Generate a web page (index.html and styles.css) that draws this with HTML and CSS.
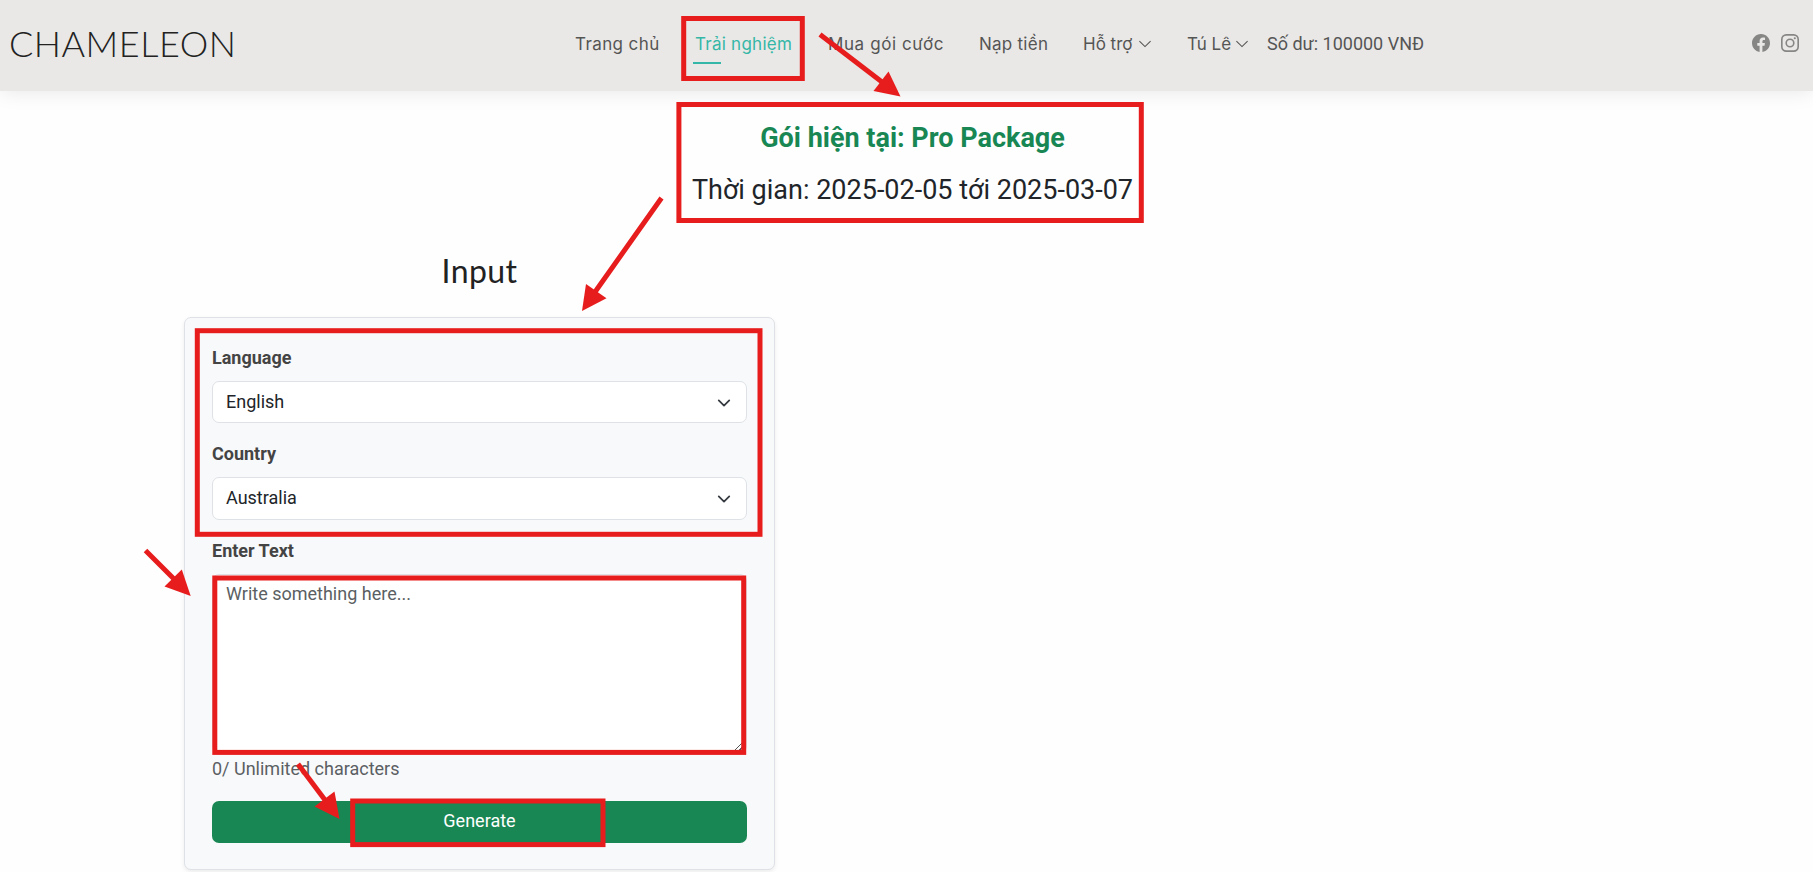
FILE: index.html
```html
<!DOCTYPE html>
<html lang="vi">
<head>
<meta charset="utf-8">
<title>Chameleon</title>
<link rel="stylesheet" href="styles.css">
</head>
<body>
<header class="header">
  <a class="logo">CHAMELEON</a>
  <nav class="nav">
    <a class="n1">Trang chủ</a>
    <a class="n2 active">Trải nghiệm</a>
    <a class="n3">Mua gói cước</a>
    <a class="n4">Nạp tiền</a>
    <a class="n5"><span>Hỗ trợ</span><svg class="chev" viewBox="0 0 16 16"><path d="M1.6 4.6 8 11l6.4-6.4"/></svg></a>
    <a class="n6"><span>Tú Lê</span><svg class="chev" viewBox="0 0 16 16"><path d="M1.6 4.6 8 11l6.4-6.4"/></svg></a>
    <span class="balance">Số dư: 100000 VNĐ</span>
  </nav>
  <div class="social">
    <svg viewBox="0 0 16 16"><path d="M16 8.049c0-4.446-3.582-8.05-8-8.05C3.58 0-.002 3.603-.002 8.05c0 4.017 2.926 7.347 6.75 7.951v-5.625h-2.03V8.05H6.75V6.275c0-2.017 1.195-3.131 3.022-3.131.876 0 1.791.157 1.791.157v1.98h-1.009c-.993 0-1.303.621-1.303 1.258v1.51h2.218l-.354 2.326H9.25V16c3.824-.604 6.75-3.934 6.75-7.951"/></svg>
    <svg viewBox="0 0 16 16"><path fill-rule="evenodd" d="M4.7 0h6.6A4.7 4.7 0 0 1 16 4.7v6.6a4.7 4.7 0 0 1-4.7 4.7H4.7A4.7 4.7 0 0 1 0 11.3V4.7A4.7 4.7 0 0 1 4.7 0m.1 1.45A3.35 3.35 0 0 0 1.45 4.8v6.4a3.35 3.35 0 0 0 3.35 3.35h6.4a3.35 3.35 0 0 0 3.35-3.35V4.8a3.35 3.35 0 0 0-3.35-3.35zM8 3.9a4.1 4.1 0 1 1 0 8.2 4.1 4.1 0 0 1 0-8.2m0 1.44a2.66 2.66 0 1 0 0 5.32 2.66 2.66 0 0 0 0-5.32m4.27-2.56a.96.96 0 1 1 0 1.92.96.96 0 0 1 0-1.92"/></svg>
  </div>
</header>
<main>
  <section class="package">
    <p class="plan">Gói hiện tại: Pro Package</p>
    <p class="period">Thời gian: 2025-02-05 tới 2025-03-07</p>
  </section>
  <section class="input">
    <h2>Input</h2>
    <form class="card">
      <label>Language</label>
      <div class="select lang"><span>English</span><svg viewBox="0 0 16 16"><path d="m2 5 6 6 6-6"/></svg></div>
      <label>Country</label>
      <div class="select country"><span>Australia</span><svg viewBox="0 0 16 16"><path d="m2 5 6 6 6-6"/></svg></div>
      <label>Enter Text</label>
      <textarea placeholder="Write something here..."></textarea>
      <p class="count">0/ Unlimited characters</p>
      <button type="button">Generate</button>
    </form>
  </section>
</main>
<svg class="marks" width="1813" height="872" viewBox="0 0 1813 872">
  <path class="grip" d="M735 750l8-8M740 750l3-3"/>
  <g class="frames">
    <rect x="683.7" y="18.5" width="118.6" height="60"/>
    <rect x="678.9" y="104.5" width="462.4" height="116"/>
    <rect x="197.3" y="330.7" width="562.7" height="203.6"/>
    <rect x="214.8" y="578" width="528.9" height="174.4"/>
    <rect x="352.7" y="801" width="250.3" height="43.6"/>
  </g>
  <g class="arrows">
    <path d="M820 34.5 882 82M661.5 198 595 292M145.500 550.500 174 579M298 764 325 800"/>
    <polygon points="900.500,96.500 873.500,91 888.500,71.500"/>
    <polygon points="582,311 586,284 606.500,298.300"/>
    <polygon points="190.700,596 164.500,586.500 181.800,569.500"/>
    <polygon points="339.500,819 314.500,806.500 334.500,791.500"/>
  </g>
</svg>
</body>
</html>
```
FILE: styles.css
```css
* { box-sizing: border-box; }
body { margin: 0; height: 872px; overflow: hidden; position: relative; background: #fefefe; font: 18px/27px Roboto, sans-serif; color: #212529; }
p, h2 { margin: 0; }
.header { height: 91px; background: #e9e8e6; box-shadow: 0 0 20px rgba(0,0,0,.1); display: grid; grid-template-columns: 575px 1fr auto; align-items: center; padding-right: 14px; }
.logo { padding: 0 0 5px 9px; font: 300 36px/44px Lato, sans-serif; color: #222; letter-spacing: .5px; }
.nav { display: grid; grid-template-columns: 120px 133px 151px 104px 104px 80px auto; align-items: center; font-family: Inter, sans-serif; font-size: 17px; color: #555; white-space: nowrap; margin-top: -3px; }
.n1 { letter-spacing: .4px; }
.n3 { letter-spacing: .6px; }
.n2, .n4 { letter-spacing: .25px; }
.active { color: #34b7a7; position: relative; }
.active::after { content: ""; position: absolute; left: -2px; top: 31px; width: 28px; height: 2px; background: #34b7a7; }
.n5, .n6 { display: flex; align-items: center; gap: 6px; }
.n6 { gap: 4px; }
.chev { width: 14px; height: 14px; fill: none; stroke: #555; stroke-width: 1.2; }
.balance { font: 18px/27px Roboto, sans-serif; padding-bottom: 2px; }
.social { display: flex; gap: 11px; margin-top: -5px; }
.social svg { width: 18px; height: 18px; fill: #868684; }
.package { text-align: center; padding: 29px 0 0 12px; font-size: 27px; line-height: 36px; }
.plan { font-weight: 700; color: #198754; }
.period { margin-top: 16px; color: #212529; }
.input { width: 591px; margin: 44px 0 0 184px; }
h2 { text-align: center; font: 400 32px/38px Lato, sans-serif; color: #222; letter-spacing: .4px; }
.card { margin-top: 27px; height: 553px; padding: 26px 27px; border: 1px solid #dee2e6; border-radius: 7px; background: #f8f9fb; box-shadow: 0 2px 4px rgba(0,0,0,.075); }
label { display: block; font-weight: 700; color: #444; margin-bottom: 10px; }
.select { height: 42px; margin-bottom: 17px; padding: 0 15px 2px 13px; border: 1px solid #dee2e6; border-radius: 7px; background: #fff; display: flex; align-items: center; justify-content: space-between; }
.country { height: 43px; }
.select svg { width: 14px; height: 14px; fill: none; stroke: #343a40; stroke-width: 2; stroke-linecap: round; stroke-linejoin: round; margin-top: 3px; }
textarea { display: block; width: 535px; height: 179px; padding: 5px 13px; border: 1px solid #dee2e6; border-radius: 7px; font: 18px/27px Roboto, sans-serif; background: #fff; }
textarea::placeholder { color: #5b5f63; }
.count { color: #5b5f63; margin: 2px 0 19px; }
button { display: block; width: 100%; height: 42px; border: 0; border-radius: 7px; background: #198754; color: #fff; font: 18px/27px Roboto, sans-serif; padding: 0 0 3px; }
.marks { position: absolute; left: 0; top: 0; pointer-events: none; }
.grip { fill: none; stroke: #555; stroke-width: 1; }
.frames { fill: none; stroke: #e71d1d; stroke-width: 5; }
.arrows { fill: #e71d1d; }
.arrows path { stroke: #e71d1d; stroke-width: 5; }
```
